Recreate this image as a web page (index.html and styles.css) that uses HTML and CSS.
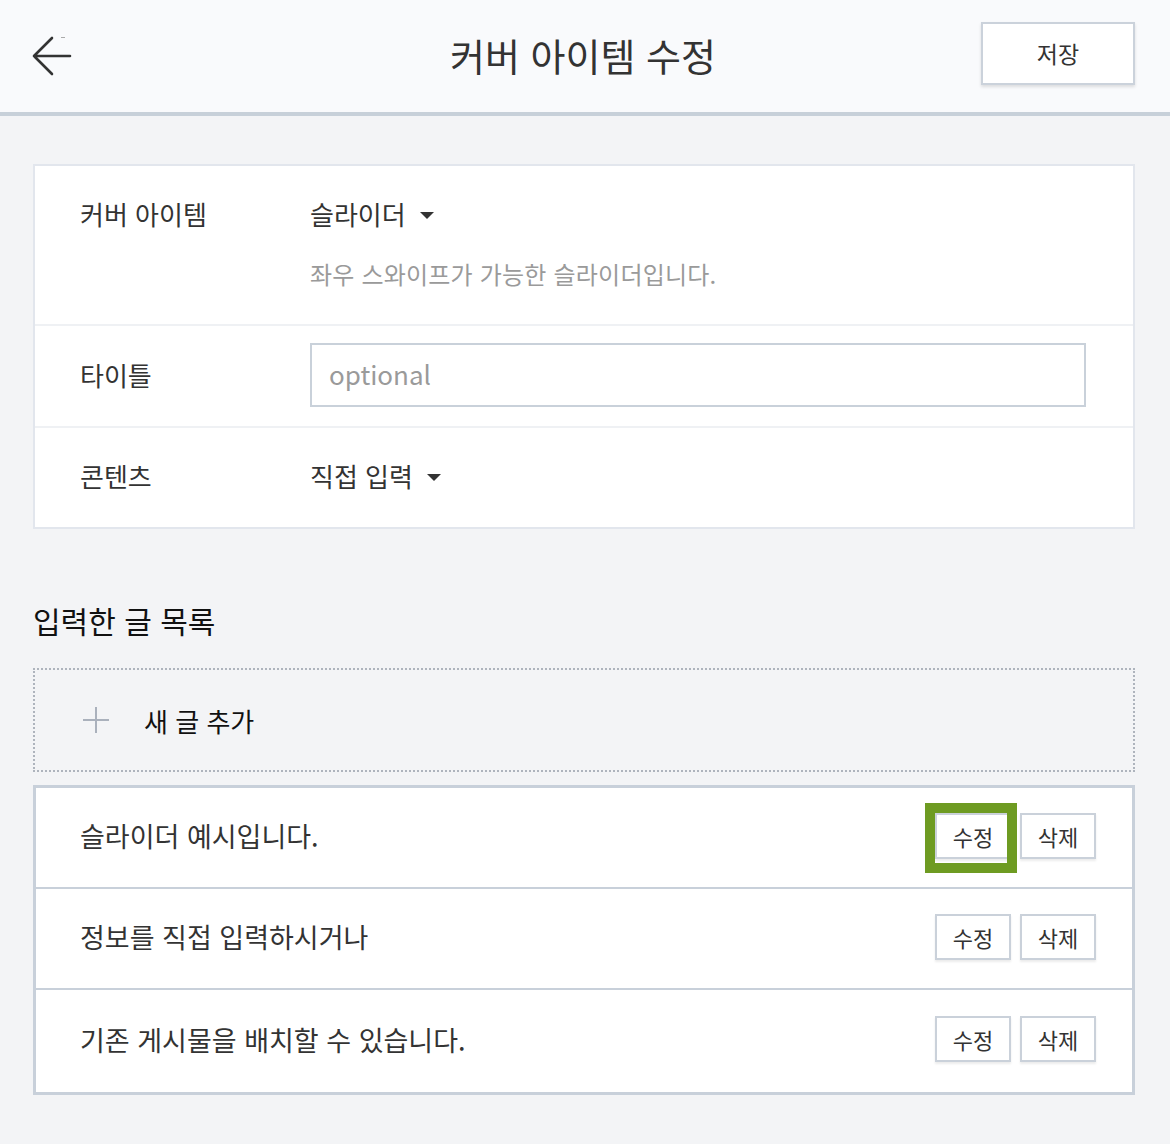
FILE: index.html
```
<!doctype html>
<html lang="ko">
  <head>
    <meta charset="UTF-8">
    <meta name="viewport" content="width=device-width, initial-scale=1.0">
    <title>커버 아이템 수정</title>
    <link rel="stylesheet" href="styles.css">
  </head>
  <body>
    <div class="header">
      <button class="back-button" aria-label="뒤로">
        <svg width="44" height="44" viewBox="0 0 44 44">
          <path d="M21 2 L3 20 L21 38 M3 20 H39" fill="none" stroke="#333" stroke-width="2.6" stroke-linecap="round" stroke-linejoin="round" />
          <path d="M30 1.5 H34" stroke="#aaa" stroke-width="1" />
        </svg>
      </button>
      <h1>커버 아이템 수정</h1>
      <div class="header-right">
        <button class="save-button">저장</button>
      </div>
    </div>

    <div class="container">
      <div class="settings-card">
        <div class="settings-row">
          <div class="row-label">커버 아이템</div>
          <div class="row-value">
            <div class="select">슬라이더<span class="caret"></span></div>
            <div class="description">좌우 스와이프가 가능한 슬라이더입니다.</div>
          </div>
        </div>
        <div class="settings-row input-row">
          <div class="row-label">타이틀</div>
          <div class="row-value">
            <input type="text" class="text-input" placeholder="optional" />
          </div>
        </div>
        <div class="settings-row">
          <div class="row-label">콘텐츠</div>
          <div class="row-value">
            <div class="select">직접 입력<span class="caret"></span></div>
          </div>
        </div>
      </div>

      <div class="section-title">입력한 글 목록</div>

      <div class="add-item">
        <span class="plus"></span>
        <span class="add-label">새 글 추가</span>
      </div>

      <div class="item-list">
        <div class="item-row">
          <span class="item-text">슬라이더 예시입니다.</span>
          <div class="item-actions">
            <button class="small-button focused">수정</button>
            <button class="small-button">삭제</button>
          </div>
        </div>
        <div class="item-row">
          <span class="item-text">정보를 직접 입력하시거나</span>
          <div class="item-actions">
            <button class="small-button">수정</button>
            <button class="small-button">삭제</button>
          </div>
        </div>
        <div class="item-row">
          <span class="item-text">기존 게시물을 배치할 수 있습니다.</span>
          <div class="item-actions">
            <button class="small-button">수정</button>
            <button class="small-button">삭제</button>
          </div>
        </div>
      </div>
    </div>
  </body>
</html>
```
FILE: styles.css
```
* {
  margin: 0;
  padding: 0;
  box-sizing: border-box;
}

body {
  width: 1170px;
  min-height: 1144px;
  font-family: "Noto Sans CJK KR", "Noto Sans", sans-serif;
  color: #333333;
  background: #f3f4f6;
}

button {
  font-family: inherit;
  color: inherit;
  background: none;
  border: none;
  cursor: pointer;
}

/* Header */
.header {
  display: grid;
  grid-template-columns: 1fr auto 1fr;
  align-items: center;
  height: 116px;
  padding: 0 35px 4px 31px;
  background: #f9fafc;
  border-bottom: 4px solid #c7d0d9;
}

.back-button {
  justify-self: start;
  display: flex;
  width: 44px;
  height: 44px;
  margin-top: 8px;
}

h1 {
  font-size: 38px;
  font-weight: 400;
  color: #333333;
  line-height: 50px;
  margin-top: 2px;
}

.header-right {
  justify-self: end;
}

.save-button {
  width: 154px;
  height: 63px;
  background: #ffffff;
  border: 2px solid #cbd2db;
  box-shadow: 0 2px 3px rgba(0, 0, 0, 0.12);
  font-size: 23px;
  color: #333333;
  margin-top: -2px;
}

/* Content */
.container {
  padding: 48px 35px 40px 33px;
}

.settings-card {
  background: #ffffff;
  border: 2px solid #e2e6ed;
}

.settings-row {
  display: flex;
  padding: 28px 47px 31px 45px;
  border-bottom: 2px solid #eff1f4;
}

.settings-row:first-child {
  padding-bottom: 32px;
}

.settings-row:last-child {
  border-bottom: none;
}

.input-row {
  align-items: center;
  padding-top: 17px;
  padding-bottom: 19px;
}

.row-label {
  width: 230px;
  flex-shrink: 0;
  font-size: 26px;
  line-height: 40px;
}

.row-value {
  flex: 1;
}

.select {
  display: flex;
  align-items: center;
  font-size: 26px;
  line-height: 40px;
}

.caret {
  width: 0;
  height: 0;
  margin-left: 14px;
  margin-top: 2px;
  border-left: 7px solid transparent;
  border-right: 7px solid transparent;
  border-top: 7px solid #333333;
}

.description {
  margin-top: 22px;
  font-size: 24px;
  line-height: 36px;
  color: #9a9a9a;
  letter-spacing: 0.2px;
}

.text-input {
  display: block;
  width: 100%;
  height: 64px;
  padding: 0 17px 3px;
  border: 2px solid #c9d1da;
  font-family: inherit;
  font-size: 26px;
  color: #333333;
  outline: none;
}

.text-input::placeholder {
  color: #9a9a9a;
}

.section-title {
  margin-top: 71px;
  font-size: 30px;
  line-height: 40px;
  color: #111111;
}

.add-item {
  display: flex;
  align-items: center;
  height: 104px;
  margin-top: 28px;
  padding-left: 48px;
  border: 2px dotted #aeb4bd;
}

.plus {
  position: relative;
  width: 26px;
  height: 26px;
  margin-right: 35px;
}

.plus::before,
.plus::after {
  content: "";
  position: absolute;
  background: #aab1bc;
}

.plus::before {
  left: 0;
  right: 0;
  top: 12px;
  height: 2px;
}

.plus::after {
  top: 0;
  bottom: 0;
  left: 12px;
  width: 2px;
}

.add-label {
  font-size: 26px;
  color: #111111;
}

.item-list {
  margin-top: 13px;
  background: #ffffff;
  border: 3px solid #c8d0da;
}

.item-row {
  display: flex;
  align-items: center;
  justify-content: space-between;
  height: 101px;
  padding: 0 36px 4px 44px;
  border-bottom: 2px solid #c8d0da;
}

.item-row:last-child {
  border-bottom: none;
  height: 102px;
}

.item-text {
  font-size: 27px;
}

.item-actions {
  display: flex;
  gap: 9px;
}

.small-button {
  position: relative;
  width: 76px;
  height: 46px;
  background: #ffffff;
  border: 2px solid #cad1da;
  box-shadow: 0 2px 2px rgba(0, 0, 0, 0.08);
  font-size: 22px;
  color: #333333;
}

/* focus ring drawn over the button */
.small-button.focused::after {
  content: "";
  box-sizing: border-box;
  position: absolute;
  left: -12px;
  top: -12px;
  width: 92px;
  height: 70px;
  border: 10px solid #6e9b22;
}
```
